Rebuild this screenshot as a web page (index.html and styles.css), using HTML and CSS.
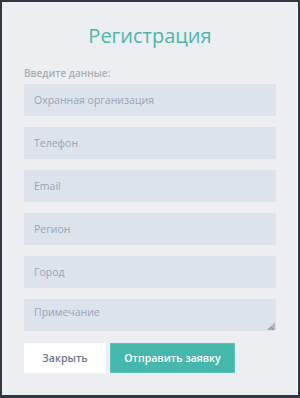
FILE: index.html
```html
<!DOCTYPE html>
<html lang="ru">
<head>
<meta charset="utf-8">
<link rel="stylesheet" href="styles.css">
</head>
<body>
<div class="panel">
  <h1 class="title">Регистрация</h1>
  <div class="label">Введите данные:</div>
  <form class="form">
    <input class="field" type="text" placeholder="Охранная организация">
    <input class="field" type="text" placeholder="Телефон">
    <input class="field" type="text" placeholder="Email">
    <input class="field" type="text" placeholder="Регион">
    <input class="field" type="text" placeholder="Город">
    <div class="area-wrap">
      <textarea class="area" placeholder="Примечание"></textarea>
    </div>
    <div class="actions">
      <button type="button" class="btn btn-close">Закрыть</button>
      <button type="button" class="btn btn-send">Отправить заявку</button>
    </div>
  </form>
</div>
</body>
</html>
```

FILE: styles.css
```css
html, body {
  margin: 0;
  padding: 0;
  background: #2f3742;
  height: 100%;
}
body {
  padding: 2px 2px 3px 2px;
  box-sizing: border-box;
  font-family: "Open Sans", "Liberation Sans", sans-serif;
}
.panel {
  background: #eceef1;
  border-right: 1px solid #f8f9fb;
  height: 393px;
  box-sizing: border-box;
  padding: 20px 21px 0 22px;
}
.title {
  margin: 0;
  font-weight: 400;
  font-size: 20px;
  line-height: 28px;
  color: #4cb7aa;
  text-align: center;
}
.label {
  margin-top: 16px;
  font-size: 10px;
  line-height: 14px;
  font-weight: 600;
  color: #aaaeb4;
}
.form {
  margin: 4px 0 0 0;
  display: flex;
  flex-direction: column;
  gap: 11px;
}
.field, .area {
  display: block;
  width: 100%;
  box-sizing: border-box;
  height: 32px;
  border: none;
  outline: none;
  background: #dce3ec;
  padding: 0 10px;
  font-family: "Open Sans", "Liberation Sans", sans-serif;
  font-size: 10.5px;
  color: #6f7a8e;
  margin: 0;
}
.field::placeholder, .area::placeholder {
  color: #97a3b6;
  opacity: 1;
}
.area-wrap {
  position: relative;
}
.area {
  resize: none;
  padding: 6px 10px 0 10px;
  line-height: 15px;
}
.area-wrap::after {
  content: "";
  position: absolute;
  right: 1px;
  bottom: 1px;
  width: 8px;
  height: 8px;
  background: repeating-linear-gradient(45deg, #8f96a3 0 1px, #c4cad3 1px 2px);
  clip-path: polygon(100% 0, 100% 100%, 0 100%);
}
.actions {
  display: flex;
  gap: 4px;
  margin-top: 1px;
}
.btn {
  height: 30px;
  border: none;
  font-family: "Open Sans", "Liberation Sans", sans-serif;
  font-size: 10.5px;
  font-weight: 600;
  padding: 0;
  cursor: pointer;
}
.btn-close {
  width: 82px;
  background: #ffffff;
  color: #6c7790;
}
.btn-send {
  width: 125px;
  background: #45b7ad;
  border: 1px solid #5cc3ba;
  color: #ffffff;
}
```
